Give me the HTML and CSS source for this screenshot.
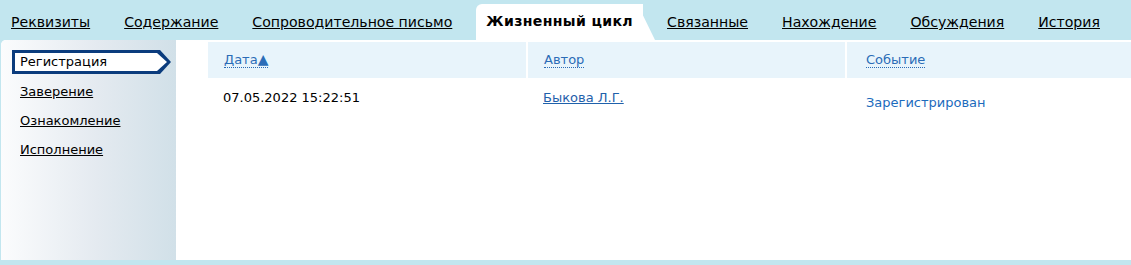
FILE: index.html
```html
<!DOCTYPE html>
<html lang="ru">
  <head>
    <meta charset="UTF-8" />
    <meta name="viewport" content="width=device-width, initial-scale=1.0" />
    <title>Жизненный цикл</title>
    <link rel="stylesheet" href="styles.css">
  </head>

  <body>
    <nav class="tabs">
      <a href="#" class="tab">Реквизиты</a>
      <a href="#" class="tab">Содержание</a>
      <a href="#" class="tab">Сопроводительное письмо</a>
      <span class="tab active">Жизненный цикл</span>
      <a href="#" class="tab">Связанные</a>
      <a href="#" class="tab">Нахождение</a>
      <a href="#" class="tab">Обсуждения</a>
      <a href="#" class="tab">История</a>
    </nav>

    <section class="panel">
      <aside class="side">
        <div class="side-current"><span>Регистрация</span></div>
        <a href="#" class="side-item">Заверение</a>
        <a href="#" class="side-item">Ознакомление</a>
        <a href="#" class="side-item">Исполнение</a>
      </aside>

      <div class="main">
        <div class="grid">
          <div class="head"><a href="#">Дата<span class="sort">▲</span></a></div>
          <div class="head"><a href="#">Автор</a></div>
          <div class="head last"><a href="#">Событие</a></div>

          <div class="cell">07.05.2022 15:22:51</div>
          <div class="cell"><a href="#" class="author">Быкова Л.Г.</a></div>
          <div class="cell event">Зарегистрирован</div>
        </div>
      </div>
    </section>
  </body>
</html>
```

FILE: styles.css
```css
* {
  margin: 0;
  padding: 0;
  box-sizing: border-box;
}

body {
  background-color: #c2e6ef;
  font-family: "DejaVu Sans", Verdana, sans-serif;
  color: #000;
  padding-bottom: 5px;
}

.tabs {
  display: flex;
  align-items: flex-end;
  gap: 14px;
  height: 40px;
  padding-left: 1px;
}

.tab {
  position: relative;
  padding: 0 10px 10px;
  font-size: 14.1px;
  color: #000;
  white-space: nowrap;
}

.tab.active {
  height: 36px;
  padding-top: 9px;
  font-weight: bold;
  letter-spacing: 0.35px;
  background: white;
  border-radius: 6px 0 0 0;
}

.tab.active::after {
  content: "";
  position: absolute;
  top: 0;
  right: -12px;
  width: 24px;
  height: 36px;
  background: white;
  border-radius: 0 7px 0 0;
  transform: skewX(26deg);
  transform-origin: bottom left;
  z-index: -1;
}

.panel {
  display: flex;
  height: 220px;
  margin-left: 1px;
  background: white;
  border-radius: 5px 0 0 0;
  overflow: hidden;
}

.side {
  display: flex;
  flex-direction: column;
  width: 175px;
  padding: 10px 0 0 11px;
  background-image: linear-gradient(to right, #fbfcfd, #e4eaf0 55%, #d1e0e8);
}

.side-current {
  width: 159px;
  height: 24px;
  margin-bottom: 6px;
  padding: 3px;
  background: #0b3c7d;
  clip-path: polygon(0 0, calc(100% - 11px) 0, 100% 50%, calc(100% - 11px) 100%, 0 100%);
}

.side-current span {
  display: block;
  height: 100%;
  width: calc(100% - 1px);
  padding-left: 5px;
  font-size: 13px;
  line-height: 18px;
  background: white;
  clip-path: polygon(0 0, calc(100% - 10px) 0, 100% 50%, calc(100% - 10px) 100%, 0 100%);
}

.side-item {
  font-size: 13px;
  color: #000;
  padding-left: 8px;
  height: 29px;
  line-height: 23px;
}

.main {
  flex: 1;
  padding: 2px 0 0 32px;
}

.grid {
  display: grid;
  grid-template-columns: 318px 317px 1fr;
  column-gap: 2px;
}

.head {
  height: 36px;
  padding: 10px 0 0 16px;
  background: #e8f4fb;
  font-size: 13px;
  color: #2b6cb7;
}

.head.last {
  padding-left: 19px;
}

.head a {
  color: #2b6cb7;
  text-decoration: none;
  border-bottom: 1px dotted #2b6cb7;
}

.sort {
  font-size: 14px;
  line-height: 1;
}

.cell {
  padding: 12px 0 0 15px;
  font-size: 13px;
}

.author {
  color: #1f61ab;
}

.event {
  padding: 17px 0 0 19px;
  color: #1c6bbd;
}
```
